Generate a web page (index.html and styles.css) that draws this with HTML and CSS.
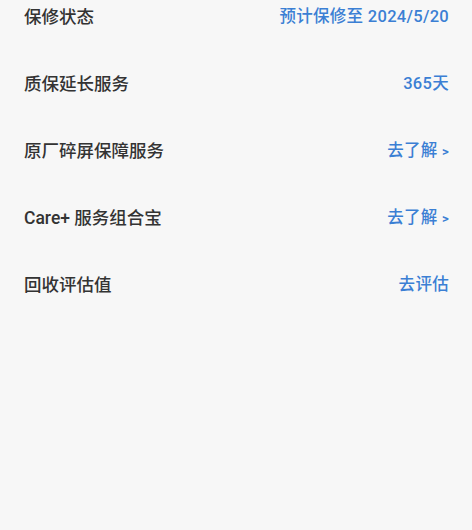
FILE: index.html
```html
<!DOCTYPE html>
<html lang="zh">
<head>
<meta charset="utf-8">
<link rel="stylesheet" href="styles.css">
</head>
<body>
<div class="list">
  <div class="row"><span class="label">保修状态</span><span class="value">预计保修至 2024/5/20</span></div>
  <div class="row"><span class="label">质保延长服务</span><span class="value">365天</span></div>
  <div class="row"><span class="label">原厂碎屏保障服务</span><span class="value">去了解 <span class="arrow">&gt;</span></span></div>
  <div class="row"><span class="label">Care+ 服务组合宝</span><span class="value">去了解 <span class="arrow">&gt;</span></span></div>
  <div class="row"><span class="label">回收评估值</span><span class="value">去评估</span></div>
</div>
</body>
</html>
```
FILE: styles.css
```css
html, body {
  margin: 0;
  padding: 0;
  background: #f7f7f7;
  height: 100%;
}
body {
  font-family: "Roboto", "Noto Sans CJK SC", sans-serif;
}
.list {
  display: flex;
  flex-direction: column;
  gap: 37px;
  padding: 0 23px 0 24px;
}
.row {
  height: 30px;
  display: flex;
  align-items: center;
  justify-content: space-between;
}
.label {
  font-size: 17.5px;
  font-weight: 500;
  color: #333333;
}
.value {
  font-size: 16.5px;
  font-weight: 500;
  letter-spacing: 0.3px;
  color: #3b7fd4;
}
.arrow {
  font-size: 13px;
  font-weight: bold;
}
```
